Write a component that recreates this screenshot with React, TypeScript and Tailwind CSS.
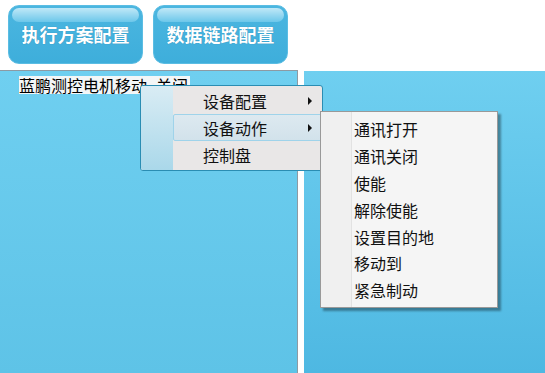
import React from 'react';

const cjk = { fontFamily: '"Microsoft YaHei", "Noto Sans CJK SC", "Noto Sans", sans-serif' };

const TopButton = ({ label }: { label: string }) => (
    <button
        className="relative w-[135px] h-[59px] rounded-[11px] bg-[linear-gradient(#4bb6e0,#3eaedb)] border border-[#5bbde3] overflow-hidden"
        style={cjk}
    >
        {/* gloss */}
        <span className="absolute left-[3px] right-[3px] top-[2px] h-[14px] rounded-[10px] bg-[linear-gradient(#c0e8f7,#6cc7ea)]" />
        <span className="relative text-white font-bold text-[18px] [text-shadow:0_0_1px_rgba(0,60,100,0.4)]">
            {label}
        </span>
    </button>
);

const mainItems = [
    { label: '设备配置', sub: true, active: false },
    { label: '设备动作', sub: true, active: true },
    { label: '控制盘', sub: false, active: false },
];

const subItems = ['通讯打开', '通讯关闭', '使能', '解除使能', '设置目的地', '移动到', '紧急制动'];

const Arrow = () => (
    <svg width="5" height="8" viewBox="0 0 5 8" className="absolute right-[8px] top-1/2 -translate-y-1/2">
        <path d="M0 0 L4 4 L0 8 Z" fill="#111" />
    </svg>
);

export default function App() {
    return (
        <div className="relative w-[545px] h-[373px] bg-white flex flex-col overflow-hidden" style={cjk}>
            {/* Header buttons */}
            <div className="h-[70px] flex items-start gap-[10px] pl-[8px] pt-[5px]">
                <TopButton label="执行方案配置" />
                <TopButton label="数据链路配置" />
            </div>

            {/* Panels */}
            <div className="flex-1 flex gap-[6px]">
                <div className="w-[298px] border-t border-r border-[#8d9aa3] bg-[linear-gradient(#6fcff0,#5ec3e7)] pl-[19px] pt-[2px]">
                    <span className="inline-block bg-[#f3f6f7] text-black text-[16px] leading-[18px] pr-[2px]">
                        蓝鹏测控电机移动_关闭
                    </span>
                </div>
                <div className="flex-1 mt-[1px] bg-[linear-gradient(#6fcff0,#4eb8e2)]" />
            </div>

            {/* Context menu */}
            <div className="absolute left-[140px] top-[85px] w-[183px] h-[86px] rounded-[3px] border border-[#2a8db3] bg-[#e9e7e7] flex overflow-hidden">
                <div className="w-[32px] bg-[linear-gradient(#d9ecf4,#aad8ea)]" />
                <div className="flex-1 flex flex-col pt-[1px]">
                    {mainItems.map(item => (
                        <div
                            key={item.label}
                            className={`relative h-[27px] flex items-center pl-[29px] text-[16px] text-[#111] rounded-[2px] ${item.active ? 'bg-[linear-gradient(#dde9f0,#d2e2eb)] border border-[#9fd3ea]' : 'border border-transparent'}`}
                        >
                            {item.label}
                            {item.sub && <Arrow />}
                        </div>
                    ))}
                </div>
            </div>

            {/* Sub menu */}
            <div className="absolute left-[320px] top-[111px] w-[178px] h-[197px] border border-[#999] bg-[#f5f5f5] flex shadow-[3px_3px_2px_rgba(0,0,0,0.35)]">
                <div className="w-[31px] bg-[#f0f0f0] border-r border-[#e2e2e2]" />
                <div className="flex-1 flex flex-col pt-[4px]">
                    {subItems.map(s => (
                        <div key={s} className="h-[26.8px] flex items-center pl-[2px] text-[16px] text-[#111]">
                            {s}
                        </div>
                    ))}
                </div>
            </div>
        </div>
    );
}
